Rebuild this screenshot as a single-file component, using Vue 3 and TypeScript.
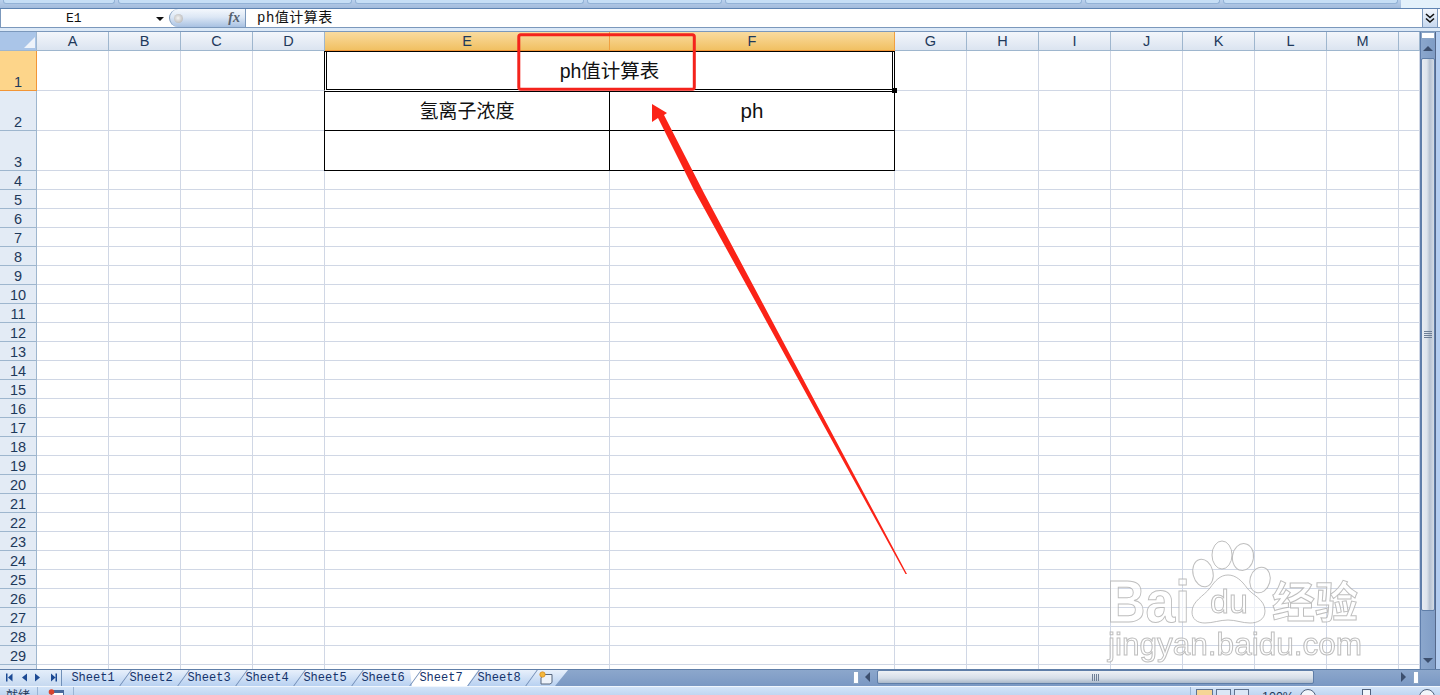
<script setup lang="ts">
const letters = ['A', 'B', 'C', 'D', 'E', 'F', 'G', 'H', 'I', 'J', 'K', 'L', 'M', '']
const activeCols = ['E', 'F']
const rows = Array.from({ length: 30 }, (_, i) => i + 1)
const sheets = ['Sheet1', 'Sheet2', 'Sheet3', 'Sheet4', 'Sheet5', 'Sheet6', 'Sheet7', 'Sheet8']
const ribbonTabs = [112, 234, 229, 135, 357, 135, 175]
const rowClass = (r: number) => (r <= 3 ? 'tall' : 'short')
</script>

<template>
  <div class="app">
    <div class="ribbon">
      <span v-for="(w, i) in ribbonTabs" :key="i" class="ribbon-part" :style="{ width: w + 'px' }"></span>
      <span class="ribbon-end"></span>
    </div>

    <div class="formula-bar">
      <div class="name-box">
        <span class="name-text">E1</span>
        <span class="name-caret"></span>
      </div>
      <div class="fx-pill">
        <span class="fx-ball"></span>
        <span class="fx-text">fx</span>
      </div>
      <div class="formula-input">ph值计算表</div>
      <div class="expand">
        <svg width="12" height="14" viewBox="0 0 12 14">
          <path d="M2 3 6 6.500 10 3M2 7.500 6 11 10 7.500" fill="none" stroke="#111" stroke-width="1.600" />
        </svg>
      </div>
    </div>
    <div class="bar-gap"></div>

    <div class="main">
      <div class="sheet">
        <div class="head-row">
          <div class="corner"><span class="corner-tri"></span></div>
          <div
            v-for="l in letters"
            :key="l"
            class="col-head"
            :class="['c-' + (l || 'N'), { active: activeCols.includes(l) }]"
          >{{ l }}</div>
        </div>
        <div v-for="r in rows" :key="r" class="row" :class="rowClass(r)">
          <div class="row-head" :class="{ active: r === 1 }">{{ r }}</div>
          <template v-if="r === 1">
            <div v-for="l in letters.slice(0, 4)" :key="l" class="cell" :class="'c-' + l"></div>
            <div class="cell merged">ph值计算表</div>
            <div v-for="l in letters.slice(6)" :key="l" class="cell" :class="'c-' + (l || 'N')"></div>
          </template>
          <template v-else>
            <div
              v-for="l in letters"
              :key="l"
              class="cell"
              :class="['c-' + (l || 'N'), { boxed: r <= 3 && activeCols.includes(l), first: r === 2 }]"
            >
              <template v-if="r === 2 && l === 'E'"><span class="cjk">氢离子浓度</span></template>
              <template v-if="r === 2 && l === 'F'"><span class="latin">ph</span></template>
            </div>
          </template>
        </div>
        <span class="handle"></span>
      </div>

      <div class="v-scroll">
        <span class="split-h"></span>
        <span class="arrow up"></span>
        <div class="v-thumb"><span class="grip-h"></span></div>
        <span class="arrow down"></span>
      </div>
      <div class="v-edge"></div>
    </div>

    <div class="tab-bar">
      <div class="nav">
        <svg width="62" height="16" viewBox="0 0 62 16">
          <path
            d="M6 3.500h1.500v8H6zM12.500 3.500v8L8 7.500zM27 3.500v8L22 7.500zM35 3.500v8L40 7.500zM51 3.500v8L55.500 7.500zM55.500 3.500H57v8h-1.500z"
            fill="#1c4a94"
          />
        </svg>
      </div>
      <div class="tabs">
        <div class="tab-strip">
          <div v-for="s in sheets" :key="s" class="tab" :class="{ current: s === 'Sheet7' }">{{ s }}</div>
          <div class="new-tab">
            <svg width="16" height="14" viewBox="0 0 16 14">
              <path d="M5 3.500h9v8l-2 1.500H3V7z" fill="#eef3fa" stroke="#56667f" />
              <circle cx="4.500" cy="3.500" r="2.700" fill="#f3b73c" stroke="#d98a1c" stroke-width="0.700" />
            </svg>
          </div>
        </div>
      </div>
      <div class="h-scroll">
        <span class="split-v"></span>
        <span class="h-arrow left"></span>
        <div class="h-thumb"><span class="grip-v"></span></div>
        <span class="h-track"></span>
        <span class="h-arrow right"></span>
        <span class="split-v end"></span>
      </div>
    </div>

    <div class="status">
      <div class="status-left">
        <span class="ready">就绪</span>
        <span class="macro">
          <svg width="16" height="12" viewBox="0 0 16 12">
            <rect x="3.500" y="1.500" width="12" height="10" fill="#fff" stroke="#4a6a9c" />
            <path d="M4 2h11v2H4z" fill="#4a6a9c" />
            <circle cx="3.500" cy="3" r="2.800" fill="#d9432e" />
          </svg>
        </span>
      </div>
      <div class="status-right">
        <div class="views">
          <span class="view on"></span>
          <span class="view"></span>
          <span class="view"></span>
        </div>
        <span class="zoom-pct">100%</span>
        <span class="round"></span>
        <span class="slider"><span class="slider-knob"></span></span>
        <span class="round"></span>
      </div>
    </div>

    <svg class="markup" width="1440" height="695" viewBox="0 0 1440 695">
      <rect x="518.800" y="34.800" width="175.500" height="54.500" rx="2" fill="none" stroke="#f4231c" stroke-width="3" />
      <path d="M652 104 667 113 664 115 705 195 907 574 905.500 574 694 190 658 118 652 122Z" fill="#fb2317" />
      <g class="wm" fill="#fff" fill-opacity="0.6" stroke="#aeaeae" stroke-opacity="0.8" stroke-width="1">
        <ellipse cx="1203" cy="573" rx="10" ry="14" transform="rotate(-14 1203 573)" />
        <ellipse cx="1222" cy="555" rx="10" ry="14" />
        <ellipse cx="1243" cy="557" rx="10.500" ry="13.500" transform="rotate(8 1243 557)" />
        <ellipse cx="1260" cy="580" rx="10" ry="13" transform="rotate(16 1260 580)" />
        <path d="M1228 575c8 0 14 6 19 13 5 7 18 11 18 23 0 9-8 12-15 12-8 0-14-3-22-3-8 0-15 3-23 3-8 0-13-4-13-11 0-11 12-16 18-24 5-7 10-13 18-13z" />
        <text x="1107" y="622" class="wm-big" textLength="83" lengthAdjust="spacingAndGlyphs">Bai</text>
        <text x="1210" y="613" class="wm-du">du</text>
        <text x="1272" y="618" class="wm-cn">经验</text>
        <text x="1108" y="655" class="wm-url" textLength="254" lengthAdjust="spacingAndGlyphs">jingyan.baidu.com</text>
      </g>
    </svg>
  </div>
</template>

<style>
html,
body {
  margin: 0;
  height: 695px;
  overflow: hidden;
  background: #fff;
}
</style>

<style scoped>
.app {
  position: relative;
  width: 1440px;
  height: 695px;
  overflow: hidden;
  background: #cfe0f4;
  font-family: "Liberation Sans", "Noto Sans CJK SC", sans-serif;
  color: #111;
  display: flex;
  flex-direction: column;
}
.ribbon {
  height: 9px;
  display: flex;
  gap: 3px;
  padding: 0 0 0 3px;
  background: linear-gradient(#b9d0ec, #a3bcdc);
  border-bottom: 1px solid #5f84b2;
  box-sizing: border-box;
  overflow: hidden;
}
.ribbon-part {
  height: 4px;
  box-sizing: border-box;
  background: #c6def5;
  border: 1px solid #93b2d6;
  border-top: 0;
  border-radius: 0 0 3px 3px;
  flex: none;
}
.ribbon-end {
  flex: 1;
  background: #e3f1fb;
  margin-right: -3px;
}
.formula-bar {
  height: 19px;
  display: flex;
  background: #fff;
  border-bottom: 1px solid #7b98bc;
  border-left: 1px solid #7b98bc;
  box-sizing: border-box;
}
.name-box {
  width: 168px;
  display: flex;
  align-items: center;
  position: relative;
  flex: none;
}
.name-text {
  font-family: "Liberation Mono", monospace;
  font-size: 13px;
  margin-left: 65px;
}
.name-caret {
  position: absolute;
  left: 155px;
  top: 8px;
  border: 4px solid transparent;
  border-top-color: #111;
  border-bottom: 0;
}
.fx-pill {
  width: 77px;
  height: 18px;
  border-radius: 10px 0 0 10px;
  border: 1px solid #7b98bc;
  border-width: 0 1px 0 1px;
  background: linear-gradient(#f4f8fd, #dce7f5 45%, #a8c1e2);
  display: flex;
  align-items: center;
  justify-content: space-between;
  padding: 0 5px 0 4px;
  box-sizing: border-box;
  flex: none;
}
.fx-ball {
  width: 9px;
  height: 9px;
  border-radius: 50%;
  background: radial-gradient(circle at 45% 45%, #f4f4f4, #a9a9a9);
}
.fx-text {
  font-family: "Liberation Serif", serif;
  font-style: italic;
  font-weight: 700;
  font-size: 14px;
  color: #55606e;
}
.formula-input {
  flex: 1;
  padding-left: 11px;
  font-family: "Liberation Mono", "Noto Sans CJK SC", monospace;
  font-size: 14px;
  line-height: 18px;
  letter-spacing: 0.500px;
}
.expand {
  width: 14px;
  margin-right: 2px;
  background: linear-gradient(#f2f6fc, #c6d8ef);
  border-left: 1px solid #7b98bc;
  border-right: 1px solid #7b98bc;
  display: flex;
  align-items: center;
  justify-content: center;
}
.bar-gap {
  height: 3px;
  background: #dce9f7;
}
.main {
  height: 638px;
  display: flex;
  background: #fff;
  border-top: 1px solid #7b98bc;
}
.sheet {
  position: relative;
  width: 1420px;
  overflow: hidden;
  flex: none;
}
.head-row {
  display: flex;
  height: 19px;
}
.corner {
  width: 37px;
  flex: none;
  box-sizing: border-box;
  background: #aac5e8;
  border-right: 1px solid #9eb6ce;
  border-bottom: 1px solid #9eb6ce;
  position: relative;
}
.corner-tri {
  position: absolute;
  right: 1px;
  bottom: 2px;
  border-style: solid;
  border-width: 0 0 11px 11px;
  border-color: transparent transparent #eef3fa transparent;
}
.col-head {
  box-sizing: border-box;
  background: linear-gradient(#f3f6fb, #dbe4f0);
  border-right: 1px solid #9eb6ce;
  border-bottom: 1px solid #9eb6ce;
  font-size: 14.500px;
  line-height: 18px;
  text-align: center;
  color: #1e395b;
  flex: none;
}
.col-head.active {
  background: linear-gradient(#f9dba0, #f1c062);
  border-right-color: #f0a040;
  border-bottom-color: #f29536;
}
.c-A,
.c-B,
.c-C,
.c-D,
.c-G,
.c-H,
.c-I,
.c-J,
.c-K,
.c-L,
.c-M {
  width: 72px;
}
.c-E,
.c-F {
  width: 285px;
}
.c-N {
  width: 21px;
}
.row {
  display: flex;
}
.row.tall {
  height: 40px;
}
.row.short {
  height: 19px;
}
.row-head {
  width: 37px;
  flex: none;
  box-sizing: border-box;
  background: #e3ebf5;
  border-right: 1px solid #9eb6ce;
  border-bottom: 1px solid #9eb6ce;
  font-size: 14.500px;
  color: #1e395b;
  text-align: center;
  display: flex;
  align-items: flex-end;
  justify-content: center;
  line-height: 16px;
}
.row-head.active {
  background: #fdd58a;
  border-right-color: #f29536;
  border-bottom-color: #f29536;
}
.cell {
  box-sizing: border-box;
  flex: none;
  border-right: 1px solid #d0d7e5;
  border-bottom: 1px solid #d0d7e5;
}
.cell.merged {
  width: 571px;
  margin-left: -1px;
  border: 1px solid #000;
  border-bottom-color: #fff;
  box-shadow:
    inset 1px 0 #fff,
    inset -1px 0 #fff,
    inset 2px 0 #000,
    inset -2px 0 #000,
    inset 0 -1px #000;
  font-size: 19.500px;
  display: flex;
  align-items: center;
  justify-content: center;
  padding-bottom: 4px;
}
.cell.boxed {
  border-right-color: #000;
  border-bottom-color: #000;
  display: flex;
  align-items: center;
  justify-content: center;
}
.cell.boxed.first {
  border-top: 1px solid #000;
}
.cell.boxed.c-E {
  width: 286px;
  margin-left: -1px;
  border-left: 1px solid #000;
}
.cjk {
  font-size: 19px;
  padding-bottom: 3px;
}
.latin {
  font-size: 20.500px;
}
.handle {
  position: absolute;
  left: 892px;
  top: 56px;
  width: 5px;
  height: 5px;
  background: #000;
}
.v-scroll {
  width: 16px;
  background: linear-gradient(90deg, #8ba7cd, #7f9cc5);
  border-left: 1px solid #5f7eac;
  border-right: 1px solid #55688a;
  box-sizing: border-box;
  display: flex;
  flex-direction: column;
  align-items: center;
  flex: none;
}
.v-edge {
  flex: 1;
  background: #b3cdf0;
}
.split-h {
  width: 14px;
  height: 7px;
  background: #fff;
  border: 1px solid #8aa5c6;
  box-sizing: border-box;
  flex: none;
}
.arrow {
  margin: 7px 0;
  border-left: 5px solid transparent;
  border-right: 5px solid transparent;
  flex: none;
}
.arrow.up {
  border-bottom: 5px solid #3c4f6e;
}
.arrow.down {
  border-top: 5px solid #3c4f6e;
  margin-top: auto;
  margin-bottom: 7px;
}
.v-thumb {
  width: 14px;
  height: 553px;
  box-sizing: border-box;
  background: linear-gradient(90deg, #e8ecf2, #dde4ec 40%, #b6c2d1 65%, #d4dce6);
  border: 1px solid #5f7ea8;
  border-radius: 2px;
  display: flex;
  align-items: center;
  justify-content: center;
  flex: none;
}
.grip-h {
  width: 8px;
  height: 7px;
  background: repeating-linear-gradient(#6e7f96 0 1px, transparent 1px 2px);
}
.tab-bar {
  position: absolute;
  left: 0;
  top: 669px;
  width: 1440px;
  height: 17px;
  display: flex;
  border-top: 1px solid #5f7ea8;
  box-sizing: border-box;
  background: linear-gradient(#8ca7cc, #7a98c3);
}
.nav {
  width: 62px;
  flex: none;
  background: linear-gradient(#e4eefa, #c6d9f0);
  border-right: 1px solid #6f8fb8;
  box-sizing: border-box;
}
.tabs {
  width: 791px;
  flex: none;
}
.tab-strip {
  width: 506px;
  height: 16px;
  display: flex;
  isolation: isolate;
  background: linear-gradient(#e8f0fb, #b8d1f1);
  clip-path: polygon(0 0, 100% 0, calc(100% - 13px) 100%, 0 100%);
}
.tab {
  position: relative;
  width: 58px;
  height: 16px;
  padding-left: 4px;
  box-sizing: border-box;
  flex: none;
  font-family: "Liberation Mono", monospace;
  font-size: 12px;
  color: #16336b;
  text-align: center;
  line-height: 16px;
}
.tab::after {
  content: "";
  position: absolute;
  top: 0;
  right: -6px;
  width: 1px;
  height: 16px;
  background: #6f8bb4;
  transform: skewX(-36deg);
}
.tab.current::before {
  content: "";
  position: absolute;
  z-index: -1;
  top: 0;
  left: 0;
  width: 68px;
  height: 16px;
  background: #fff;
  clip-path: polygon(0 0, 100% 0, 57px 100%, 2px 100%);
}
.new-tab {
  width: 42px;
  padding: 1px 0 0 12px;
  box-sizing: border-box;
  flex: none;
  line-height: 0;
}
.h-scroll {
  flex: 1;
  display: flex;
  align-items: flex-start;
  height: 16px;
  position: relative;
}
.split-v {
  width: 6px;
  height: 13px;
  margin-top: 1px;
  background: #fff;
  border: 1px solid #8aa5c6;
  box-sizing: border-box;
  flex: none;
}
.h-arrow {
  margin-top: 2px;
  border-top: 5px solid transparent;
  border-bottom: 5px solid transparent;
  flex: none;
}
.h-arrow.left {
  border-right: 5px solid #3c4f6e;
  margin-left: 6px;
  margin-right: 7px;
}
.h-arrow.right {
  border-left: 5px solid #3c4f6e;
  margin-right: 7px;
}
.h-thumb {
  width: 437px;
  height: 14px;
  box-sizing: border-box;
  background: linear-gradient(#eef1f5, #d6dee8 60%, #aab8c9);
  border: 1px solid #5f7ea8;
  border-radius: 2px;
  display: flex;
  align-items: center;
  justify-content: center;
  flex: none;
}
.grip-v {
  width: 7px;
  height: 7px;
  background: repeating-linear-gradient(90deg, #6e7f96 0 1px, transparent 1px 2px);
}
.h-track {
  flex: 1;
}
.split-v.end {
  margin-right: 21px;
}
.status {
  position: absolute;
  left: 0;
  top: 686px;
  width: 1440px;
  height: 9px;
  background: linear-gradient(#d3e4f8, #c0d6f1);
  border-top: 1px solid #f0f6fd;
  box-sizing: border-box;
  display: flex;
  justify-content: space-between;
  overflow: hidden;
}
.status-left {
  display: flex;
}
.ready {
  font-size: 12px;
  width: 38px;
  padding-left: 6px;
  padding-top: 2px;
  line-height: 14px;
  color: #1e395b;
  box-sizing: border-box;
  border-right: 1px solid #9ab4d4;
}
.macro {
  width: 36px;
  padding: 2px 0 0 10px;
  border-right: 1px solid #9ab4d4;
  box-sizing: border-box;
  line-height: 0;
}
.status-right {
  display: flex;
  align-items: flex-start;
  width: 250px;
  padding-top: 2px;
  box-sizing: border-box;
  border-left: 1px solid #9ab4d4;
}
.views {
  display: flex;
  gap: 3px;
  width: 71px;
  padding-left: 5px;
  box-sizing: border-box;
}
.view {
  width: 15px;
  height: 14px;
  background: #dbe7f6;
  border: 1px solid #5f7391;
  box-sizing: border-box;
}
.view.on {
  width: 17px;
  background: #f6d596;
}
.zoom-pct {
  font-size: 12.500px;
  line-height: 14px;
  color: #1e395b;
  width: 38px;
  margin-top: 1px;
}
.round {
  width: 16px;
  height: 16px;
  border-radius: 50%;
  background: #f2f6fb;
  border: 1px solid #50627e;
  box-sizing: border-box;
  flex: none;
}
.slider {
  width: 103px;
  position: relative;
  flex: none;
}
.slider-knob {
  position: absolute;
  left: 46px;
  top: 0;
  width: 9px;
  height: 12px;
  background: #f2f6fb;
  border: 1px solid #50627e;
  box-sizing: border-box;
}
.markup {
  position: absolute;
  left: 0;
  top: 0;
  pointer-events: none;
}
.wm {
  filter: blur(0.4px);
}
.wm-big {
  font-family: "Liberation Sans", sans-serif;
  font-weight: 700;
  font-size: 60px;
}
.wm-du {
  font-family: "Liberation Sans", sans-serif;
  font-size: 34px;
}
.wm-cn {
  font-family: "Noto Sans CJK SC", sans-serif;
  font-weight: 700;
  font-size: 43px;
}
.wm-url {
  font-family: "Liberation Sans", sans-serif;
  font-size: 31px;
}
</style>
